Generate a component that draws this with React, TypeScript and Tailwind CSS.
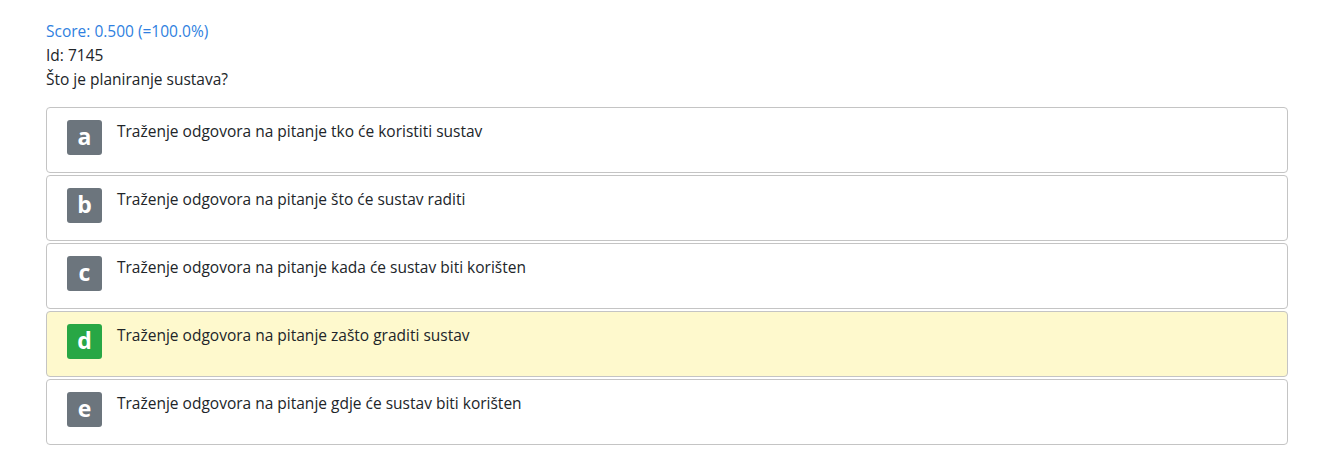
const answers = [
  { key: "a", text: "Traženje odgovora na pitanje tko će koristiti sustav", correct: false },
  { key: "b", text: "Traženje odgovora na pitanje što će sustav raditi", correct: false },
  { key: "c", text: "Traženje odgovora na pitanje kada će sustav biti korišten", correct: false },
  { key: "d", text: "Traženje odgovora na pitanje zašto graditi sustav", correct: true },
  { key: "e", text: "Traženje odgovora na pitanje gdje će sustav biti korišten", correct: false },
];

const App = () => {
  return (
    <div
      className="min-h-[455px] bg-white pl-[46px] pr-[40px] pt-[19px] text-[15.5px] leading-[24px] text-[#212529]"
      style={{ fontFamily: '"Open Sans", "Noto Sans", sans-serif' }}
    >
      <div className="text-[#2f7fe0]">Score: 0.500 (=100.0%)</div>
      <div>Id: 7145</div>
      <div>Što je planiranje sustava?</div>

      <div className="mt-[16px] flex flex-col gap-[2px]">
        {answers.map((a) => (
          <div
            key={a.key}
            className={
              "flex h-[66px] items-start rounded-[4px] border border-[#c4c4c4] pl-[20px] pt-[12px] " +
              (a.correct ? "bg-[#fef9cd]" : "bg-white")
            }
          >
            <span
              className={
                "flex h-[35px] w-[35px] shrink-0 items-center justify-center rounded-[3px] pb-[2px] text-[23px] leading-none font-bold text-white " +
                (a.correct ? "bg-[#28a745]" : "bg-[#6c757d]")
              }
            >
              {a.key}
            </span>
            <span className="ml-[15px] -mt-[1px]">{a.text}</span>
          </div>
        ))}
      </div>
    </div>
  );
};

export default App;
